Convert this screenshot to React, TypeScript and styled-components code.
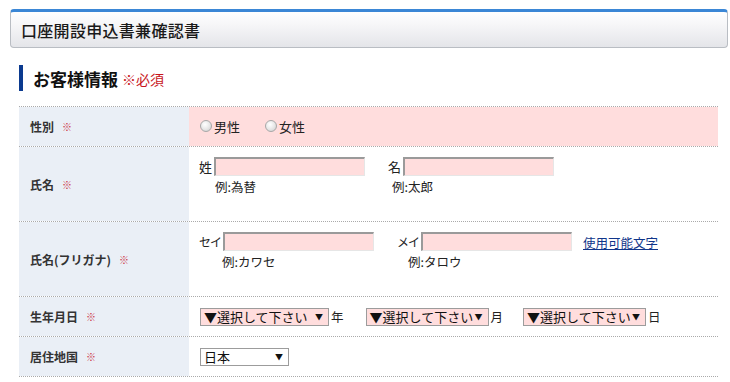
import React from "react";
import styled, { createGlobalStyle } from "styled-components";

const Global = createGlobalStyle`
  html, body { margin: 0; padding: 0; background: #fff; }
  body { font-family: "Noto Sans CJK JP", "Noto Sans", sans-serif; color: #222; }
`;

const Page = styled.div`
  padding: 9px 2px 0 10px;
  width: 718px;
`;

const Header = styled.div`
  height: 35px;
  border: 1px solid #b9bdc3;
  border-top: 3px solid #3b87d6;
  border-radius: 4px;
  background: linear-gradient(#ffffff 0%, #f5f5f7 40%, #e4e5e9 100%);
  display: flex;
  align-items: center;
  padding-left: 10px;
  font-size: 16px;
  font-weight: 500;
  color: #1a1a1a;
  letter-spacing: 0.3px;
`;

const Body = styled.div`
  padding: 0 10px 0 9px;
`;

const SectionTitle = styled.div`
  margin-top: 17px;
  height: 26px;
  border-left: 4px solid #0b3a8f;
  display: flex;
  align-items: center;
  padding-left: 10px;
  gap: 4px;
  font-size: 17px;
  font-weight: bold;
  color: #111;
`;

const Required = styled.span`
  color: #c8161d;
  font-size: 14px;
  font-weight: normal;
  padding-top: 2px;
`;

const Table = styled.div`
  margin-top: 15px;
  border-top: 1px dotted #aaa;
`;

const Row = styled.div<{ $h: number }>`
  display: grid;
  grid-template-columns: 170px 1fr;
  height: ${(p) => p.$h}px;
  border-bottom: 1px dotted #aaa;
`;

const Label = styled.div`
  background: #eaeff6;
  display: flex;
  align-items: center;
  padding-left: 11px;
  font-size: 12px;
  font-weight: bold;
  color: #333;
  gap: 8px;
`;

const Mark = styled.span`
  color: #cc3344;
  font-size: 10px;
  font-weight: normal;
`;

const Cell = styled.div<{ $pink?: boolean; $top?: boolean }>`
  background: ${(p) => (p.$pink ? "#ffdddd" : "#fff")};
  display: flex;
  align-items: ${(p) => (p.$top ? "flex-start" : "center")};
  padding: ${(p) => (p.$top ? "10px 0 0 10px" : "0 0 0 11px")};
  font-size: 13px;
  color: #222;
`;

const RadioItem = styled.label`
  display: flex;
  align-items: center;
  gap: 2px;
  margin-right: 25px;
`;

const RadioDot = styled.span`
  width: 12px;
  height: 12px;
  border-radius: 50%;
  border: 1px solid #a8a8a8;
  background: radial-gradient(circle at 40% 35%, #ffffff 0%, #e6e6e6 55%, #c8c8c8 100%);
  box-sizing: border-box;
  margin-top: -2px;
`;

const NameGroup = styled.div<{ $w: number }>`
  width: ${(p) => p.$w}px;
  display: flex;
  flex-direction: column;
`;

const NameLine = styled.div`
  display: flex;
  align-items: center;
  gap: 2px;
`;

const Kana = styled.span`
  font-size: 12px;
  letter-spacing: -1px;
`;

const TextInput = styled.div`
  width: 148px;
  height: 16px;
  background: #ffdddd;
  border-top: 2px solid #9a9a9a;
  border-left: 2px solid #9a9a9a;
  border-right: 1px solid #e6e6e6;
  border-bottom: 1px solid #e6e6e6;
`;

const Example = styled.div<{ $indent: number }>`
  padding-left: ${(p) => p.$indent}px;
  margin-top: 1px;
  font-size: 12.5px;
`;

const Link = styled.a`
  color: #10358a;
  text-decoration: underline;
  margin-top: 1px;
  font-size: 12.5px;
`;

const Select = styled.div<{ $w: number; $pink?: boolean }>`
  width: ${(p) => p.$w}px;
  height: 18px;
  box-sizing: border-box;
  border: 1px solid #9c9c9c;
  background: ${(p) => (p.$pink ? "#ffdddd" : "#fff")};
  display: flex;
  align-items: center;
  justify-content: space-between;
  padding: 0 5px 0 3px;
  font-size: 13px;
  color: #111;
`;

const Arrow = styled.span`
  font-size: 8px;
`;

const Unit = styled.span<{ $gap: number }>`
  margin-left: 2px;
  margin-right: ${(p) => p.$gap}px;
  font-size: 12.5px;
`;

export default function App() {
  return (
    <>
      <Global />
      <Page>
        <Header>口座開設申込書兼確認書</Header>
        <Body>
          <SectionTitle>
            お客様情報<Required>※必須</Required>
          </SectionTitle>
          <Table>
            <Row $h={39}>
              <Label>
                性別<Mark>※</Mark>
              </Label>
              <Cell $pink>
                <RadioItem>
                  <RadioDot />
                  男性
                </RadioItem>
                <RadioItem>
                  <RadioDot />
                  女性
                </RadioItem>
              </Cell>
            </Row>
            <Row $h={74}>
              <Label>
                氏名<Mark>※</Mark>
              </Label>
              <Cell $top>
                <NameGroup $w={189}>
                  <NameLine>
                    姓<TextInput />
                  </NameLine>
                  <Example $indent={16}>例:為替</Example>
                </NameGroup>
                <NameGroup $w={180}>
                  <NameLine>
                    名<TextInput />
                  </NameLine>
                  <Example $indent={4}>例:太郎</Example>
                </NameGroup>
              </Cell>
            </Row>
            <Row $h={74}>
              <Label>
                氏名(フリガナ)<Mark>※</Mark>
              </Label>
              <Cell $top>
                <NameGroup $w={198}>
                  <NameLine>
                    <Kana>セイ</Kana>
                    <TextInput />
                  </NameLine>
                  <Example $indent={23}>例:カワセ</Example>
                </NameGroup>
                <NameGroup $w={186}>
                  <NameLine>
                    <Kana>メイ</Kana>
                    <TextInput />
                  </NameLine>
                  <Example $indent={11}>例:タロウ</Example>
                </NameGroup>
                <Link href="#">使用可能文字</Link>
              </Cell>
            </Row>
            <Row $h={39}>
              <Label>
                生年月日<Mark>※</Mark>
              </Label>
              <Cell>
                <Select $w={129} $pink>
                  ▼選択して下さい<Arrow>▼</Arrow>
                </Select>
                <Unit $gap={22}>年</Unit>
                <Select $w={123} $pink>
                  ▼選択して下さい<Arrow>▼</Arrow>
                </Select>
                <Unit $gap={20}>月</Unit>
                <Select $w={123} $pink>
                  ▼選択して下さい<Arrow>▼</Arrow>
                </Select>
                <Unit $gap={0}>日</Unit>
              </Cell>
            </Row>
            <Row $h={39}>
              <Label>
                居住地国<Mark>※</Mark>
              </Label>
              <Cell>
                <Select $w={89}>
                  日本<Arrow>▼</Arrow>
                </Select>
              </Cell>
            </Row>
          </Table>
        </Body>
      </Page>
    </>
  );
}
